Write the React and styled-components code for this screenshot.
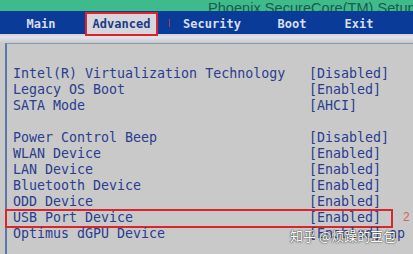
import React from "react";
import styled, { createGlobalStyle } from "styled-components";

const GlobalStyle = createGlobalStyle`
  html, body {
    margin: 0;
    padding: 0;
    background: #c9c9c9;
  }
  body {
    width: 413px;
    height: 254px;
    overflow: hidden;
  }
`;

const tabs = [
  { label: "Main", width: 82 },
  { label: "Advanced", width: 73, active: true },
  { label: "Security", width: 84, sep: true },
  { label: "Boot", width: 76 },
  { label: "Exit", width: 58 },
];

const groups = [
  [
    ["Intel(R) Virtualization Technology", "[Disabled]"],
    ["Legacy OS Boot", "[Enabled]"],
    ["SATA Mode", "[AHCI]"],
  ],
  [
    ["Power Control Beep", "[Disabled]"],
    ["WLAN Device", "[Enabled]"],
    ["LAN Device", "[Enabled]"],
    ["Bluetooth Device", "[Enabled]"],
    ["ODD Device", "[Enabled]"],
    ["USB Port Device", "[Enabled]", true],
    ["Optimus dGPU Device", "[Enabled]  ap"],
  ],
];

const Screen = () => {
  return (
    <Page>
      <GlobalStyle />
      <TitleBar>
        <span>Phoenix SecureCore(TM) Setup Utility</span>
      </TitleBar>
      <MenuBar>
        {tabs.map((t) => (
          <Tab key={t.label} width={t.width} active={t.active} sep={t.sep}>
            {t.label}
          </Tab>
        ))}
      </MenuBar>
      <Strip />
      <Panel>
        {groups.map((g, i) => (
          <Group key={i}>
            {g.map(([name, value, marked]) => (
              <Row key={name} marked={marked}>
                <Name>{name}</Name>
                <Value>{value}</Value>
                {marked && <Mark>2</Mark>}
              </Row>
            ))}
          </Group>
        ))}
        <Watermark>知乎 @烦躁的豆包</Watermark>
      </Panel>
    </Page>
  );
};

export default function App() {
  return <Screen />;
}

const Page = styled.div`
  width: 413px;
  height: 254px;
  background: #c9c9c9;
  overflow: hidden;
  display: flex;
  flex-direction: column;
`;

const TitleBar = styled.div`
  height: 11px;
  background: #3fba8c;
  overflow: hidden;
  display: flex;
  align-items: flex-end;
  padding-left: 208px;
  span {
    font-family: "Liberation Sans", Arial, sans-serif;
    font-size: 14.6px;
    line-height: 14px;
    color: #1b5c44;
    white-space: nowrap;
    transform: translateY(4px);
  }
`;

const MenuBar = styled.div`
  height: 23px;
  background: #0b3b98;
  display: flex;
  align-items: stretch;
`;

const Tab = styled.div`
  position: relative;
  width: ${(p) => p.width}px;
  margin-left: ${(p) => (p.active ? "3px" : "0")};
  box-sizing: border-box;
  display: flex;
  align-items: center;
  justify-content: center;
  padding-top: ${(p) => (p.active ? "0" : "2px")};
  font-family: "DejaVu Sans Mono", monospace;
  font-weight: bold;
  font-size: 12px;
  color: ${(p) => (p.active ? "#1d3a86" : "#d6def0")};
  background: ${(p) => (p.active ? "#d6d6dc" : "transparent")};
  border: ${(p) => (p.active ? "2px solid #d8262c" : "none")};
  margin-right: ${(p) => (p.active ? "12px" : "0")};
  height: ${(p) => (p.active ? "24px" : "auto")};
  margin-top: ${(p) => (p.active ? "1px" : "0")};
  z-index: 1;
  &::before {
    content: "";
    display: ${(p) => (p.sep ? "block" : "none")};
    position: absolute;
    left: -1px;
    top: 8px;
    width: 1px;
    height: 8px;
    background: #a0405c;
  }
`;

const Strip = styled.div`
  height: 9px;
  background: linear-gradient(
    to bottom,
    #cfd0d8 0px,
    #e4e4ec 3px,
    #d6d6de 6px,
    #c9c9c9 9px
  );
`;

const Panel = styled.div`
  position: relative;
  flex: 1;
  margin-left: 5px;
  border-top: 1px solid #8a98b4;
  border-left: 2px solid #5c78a8;
  padding: 21px 0 0 6px;
  display: flex;
  flex-direction: column;
  gap: 16px;
`;

const Group = styled.div`
  display: flex;
  flex-direction: column;
`;

const Row = styled.div`
  position: relative;
  height: 16px;
  display: flex;
  align-items: center;
  font-family: "DejaVu Sans Mono", monospace;
  font-size: 13.3px;
  color: #2b3d8e;
  white-space: nowrap;
  &::after {
    content: "";
    display: ${(p) => (p.marked ? "block" : "none")};
    position: absolute;
    left: -8px;
    top: 0px;
    width: 384px;
    height: 15px;
    border: 2px solid #d8262c;
  }
`;

const Name = styled.span`
  width: 296px;
`;

const Value = styled.span``;

const Mark = styled.span`
  position: absolute;
  left: 390px;
  font-family: "Liberation Sans", Arial, sans-serif;
  font-size: 12px;
  color: #d86060;
`;

const Watermark = styled.div`
  position: absolute;
  left: 283px;
  top: 182px;
  font-family: "Noto Sans CJK SC", sans-serif;
  font-size: 13px;
  color: #ffffff;
  text-shadow: 0 0 2px #444, 0 0 1px #222;
  white-space: nowrap;
`;
